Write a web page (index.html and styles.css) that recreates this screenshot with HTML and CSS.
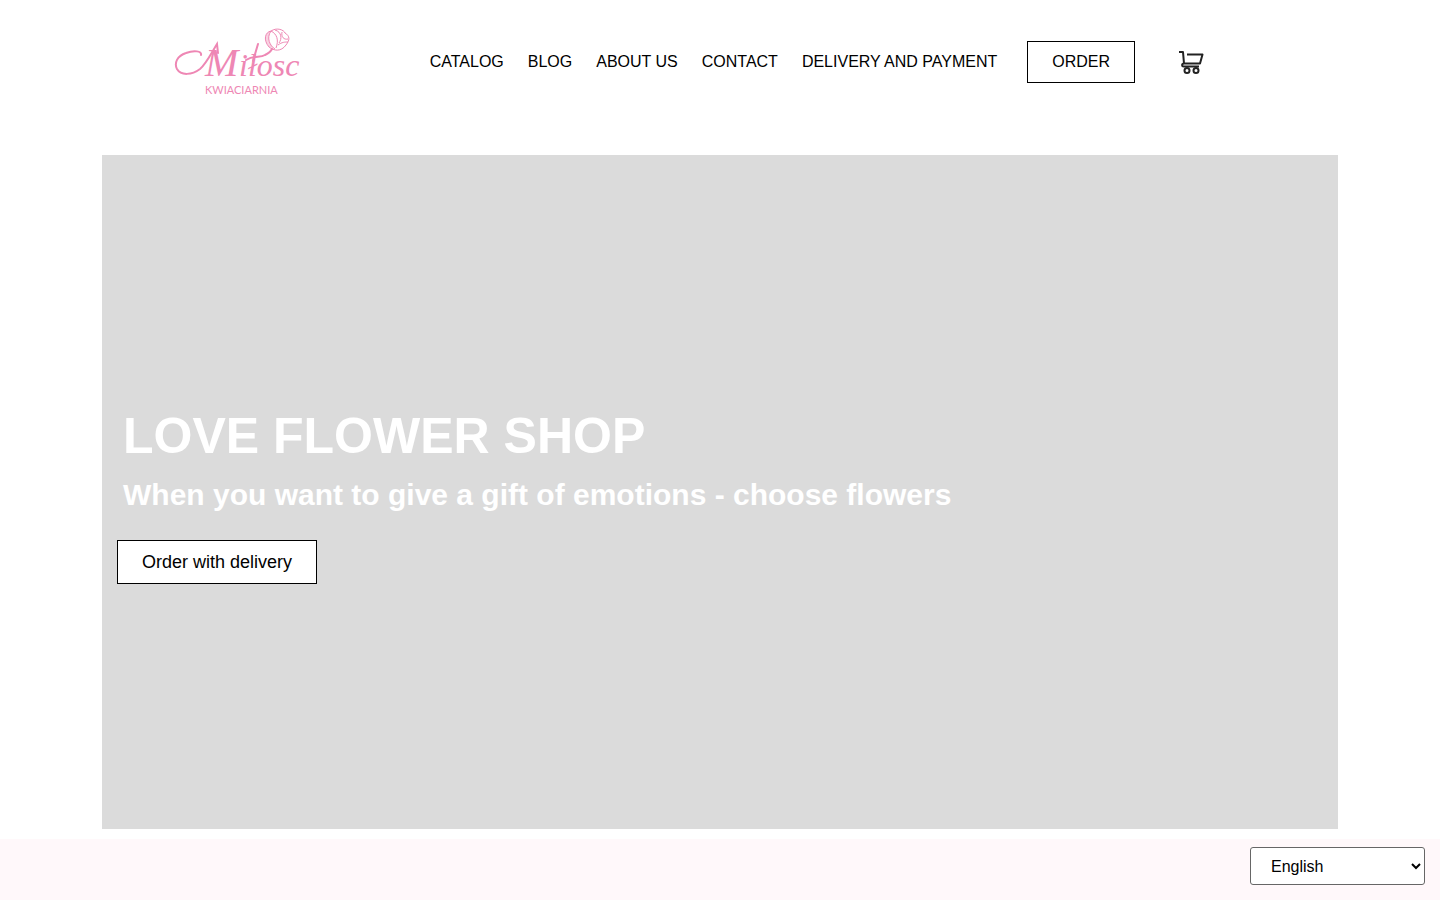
FILE: index.html
```html
<!DOCTYPE html>
<html lang="en">
  <head>
    <meta charset="UTF-8" />
    <meta name="viewport" content="width=device-width, initial-scale=1.0" />
    <title>Love Flower Shop</title>
    <link rel="stylesheet" href="styles.css">
  </head>
  <body>
    <header class="header">
      <a href="#" class="logo" aria-label="Miłosc Kwiaciarnia">
        <svg width="126" height="70" viewBox="0 0 126 70">
          <!-- swash of the first letter -->
          <path class="logo-line" d="M27 28C28 24 20 23 12 26C3 29 0 36 3 42C7 49 18 48 26 42C32 37 38 25 43 17L44 26" />
          <text class="logo-name logo-first" x="31" y="49">M</text>
          <text class="logo-name" x="65" y="49">iłosc</text>
          <text class="logo-sub" x="31" y="67">KWIACIARNIA</text>
          <!-- rose -->
          <path class="logo-line" d="M79 34L84 17" />
          <path class="logo-stem" d="M72 33C80 28 86 31 91 28C95 26 97 24 98 22" />
          <g class="logo-rose">
            <path class="logo-petal" d="M95 20C89 13 91 5 97 4C92 11 96 19 101 22" />
            <path d="M95 20C100 24 107 25 112 18C116 13 116 9 111 6C110 3 103 0 97 4C103 7 105 13 102 21" />
            <path d="M101 3C108 5 108 12 105 16M108 5C107 10 110 13 114 12M104 18C108 15 111 15 114 15" />
          </g>
        </svg>
      </a>
      <nav class="nav">
        <a href="#">CATALOG</a>
        <a href="#">BLOG</a>
        <a href="#">ABOUT US</a>
        <a href="#">CONTACT</a>
        <a href="#">DELIVERY AND PAYMENT</a>
      </nav>
      <button class="btn order-btn">ORDER</button>
      <button class="cart" aria-label="Cart">
        <svg width="26" height="26" viewBox="0 0 26 26">
          <path d="M0 3H4L5 14.500H21L23.500 5.500H8M5 14.500C2.500 14.500 2.500 17.500 5 17.500H20" />
          <circle cx="8" cy="21.500" r="2.500" />
          <circle cx="17" cy="21.500" r="2.500" />
        </svg>
      </button>
    </header>
    <main>
      <section class="hero">
        <h1>LOVE FLOWER SHOP</h1>
        <h2>When you want to give a gift of emotions - choose flowers</h2>
        <button class="btn hero-btn">Order with delivery</button>
      </section>
      <section class="about"></section>
    </main>
    <select class="language" aria-label="Language">
      <option>English</option>
      <option>Polski</option>
    </select>
  </body>
</html>
```
FILE: styles.css
```css
* {
  box-sizing: border-box;
}
body {
  margin: 0;
  min-height: 100vh;
  display: flex;
  flex-direction: column;
  font-family: "Liberation Sans", Arial, sans-serif;
  font-size: 16px;
  color: #000;
  background-color: #fff;
}
.header {
  display: flex;
  align-items: center;
  width: 100%;
  max-width: 1236px;
  margin: 0 auto;
  padding: 27px 133px 58px 72px;
}
.logo {
  display: flex;
}
.logo svg,
.cart svg {
  display: block;
  fill: none;
}
.logo-line,
.logo-stem {
  stroke: #ee87b4;
  stroke-width: 2;
  stroke-linecap: round;
}
.logo-name {
  fill: #ee87b4;
  font-family: "Liberation Serif", serif;
  font-size: 32px;
  font-style: italic;
}
.logo-first {
  font-size: 40px;
}
.logo-sub {
  fill: #ee87b4;
  font-family: Lato, sans-serif;
  font-size: 11px;
}
.logo-rose {
  stroke: #ee87b4;
  stroke-width: 1;
}
.logo-petal {
  fill: #f9d3e2;
}
.nav {
  display: flex;
  gap: 24px;
  margin-left: auto;
}
.nav a {
  color: #000;
  text-decoration: none;
}
.btn {
  padding: 0 24px;
  border: 1px solid #000;
  background-color: #fff;
  color: #000;
  font-family: inherit;
  cursor: pointer;
}
.order-btn {
  height: 42px;
  margin-left: 30px;
  font-size: 16px;
}
.cart {
  margin-left: 44px;
  padding: 0;
  border: none;
  background: none;
  cursor: pointer;
}
.cart svg {
  stroke: #222;
  stroke-width: 2;
  stroke-linejoin: round;
}
main {
  flex: 1;
  display: flex;
  flex-direction: column;
}
.hero {
  display: flex;
  flex-direction: column;
  align-items: flex-start;
  justify-content: center;
  width: 100%;
  max-width: 1236px;
  min-height: 674px;
  margin: 0 auto 10px;
  padding: 6px 15px 0;
  background-color: #dbdbdb;
  color: #fff;
}
.hero h1,
.hero h2 {
  margin: 0;
  padding: 0 6px;
}
.hero h1 {
  font-size: 50px;
  line-height: 60px;
}
.hero h2 {
  margin: 11px 0 27px;
  font-size: 30px;
  line-height: 36px;
}
.hero-btn {
  height: 44px;
  font-size: 18px;
}
.about {
  flex: 1;
  background-color: #fff8fa;
}
.language {
  position: fixed;
  right: 15px;
  bottom: 15px;
  width: 175px;
  height: 38px;
  padding: 0 16px;
  border: 1px solid #666;
  border-radius: 3px;
  background-color: #fff;
  color: #000;
  font-family: inherit;
  font-size: 16px;
}
```
